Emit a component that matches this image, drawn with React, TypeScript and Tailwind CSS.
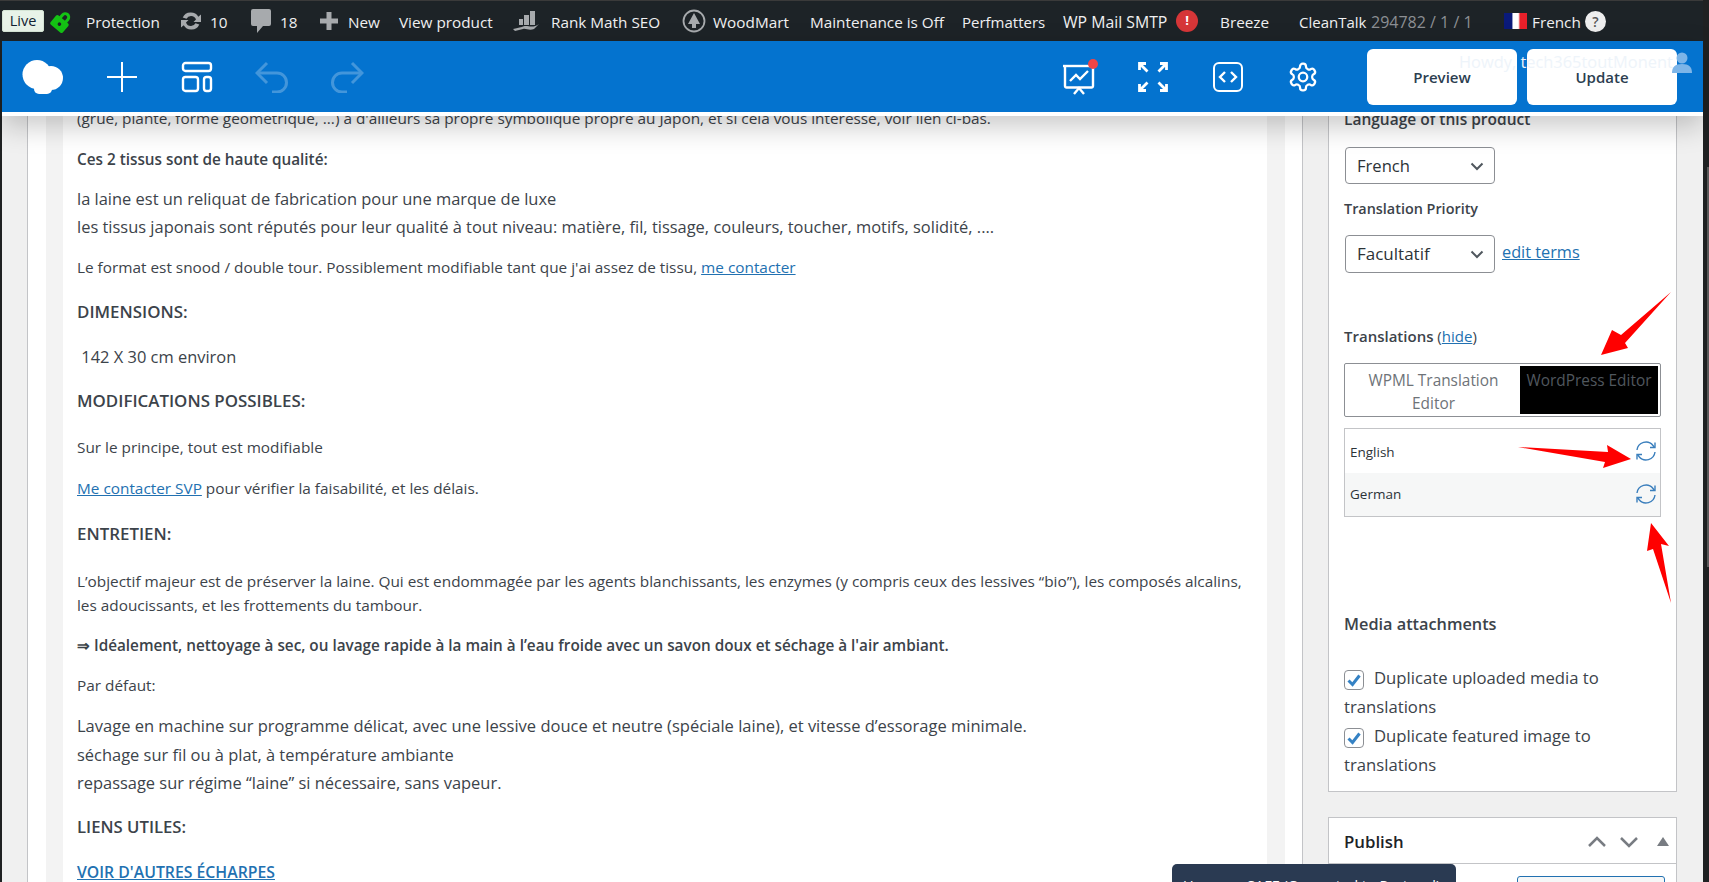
import React from "react";

const Chevron = () => (
  <svg width="16" height="16" viewBox="0 0 16 16" fill="none" stroke="#50575e" strokeWidth="2" className="shrink-0">
    <path d="M2.500 5.500 8 11l5.500-5.500" />
  </svg>
);

const Sync = () => (
  <svg width="22" height="22" viewBox="0 0 22 22" fill="none" stroke="#3b7fbd" strokeWidth="1.400">
    <path d="M2 10a9 9 0 0 1 16-4.500l1.500 2" />
    <path d="M20 2.500v5h-5" />
    <path d="M20 12a9 9 0 0 1-16 4.500l-1.500-2" />
    <path d="M2 19.500v-5h5" />
  </svg>
);

const Check = () => (
  <span className="inline-flex w-[20px] h-[20px] rounded-[4px] border border-[#8c8f94] items-center justify-center align-[-4px] mr-[10px] bg-white">
    <svg width="16" height="16" viewBox="0 0 16 16" fill="none" stroke="#3582c4" strokeWidth="3">
      <path d="M2.500 8.500 6.500 12.500 13.500 3.500" />
    </svg>
  </span>
);

const P = ({ className, children }: { className: string; children: React.ReactNode }) => (
  <p className={`whitespace-nowrap ${className}`}>{children}</p>
);

export default function App() {
  return (
    <div className="w-[1709px] h-[882px] overflow-hidden flex bg-[#1f2122] text-[#3c434a] font-['Open_Sans','Noto_Sans',sans-serif] relative">
      <div className="w-[1703px] shrink-0 flex flex-col h-full">
        {/* Admin bar */}
        <div className="h-[41px] shrink-0 bg-[#1d2327] border-t border-[#3a3a3a] flex items-center text-[15.3px] text-[#f0f0f1] pl-[2px] whitespace-nowrap">
          <span className="w-[42px] h-[22px] bg-[#e8f3e8] border border-[#d5e5d5] rounded-[2px] text-[#123] flex items-center justify-center text-[14.5px]">Live</span>
          <svg width="24" height="24" viewBox="0 0 24 24" className="ml-[6px] shrink-0">
            <g transform="rotate(40 12 12)" fill="#14c214">
              <rect x="4" y="10" width="16" height="12" rx="2" />
              <path d="M7 11V7a5 5 0 0 1 10 0v4h-3V7a2 2 0 0 0-4 0v4z" />
              <circle cx="12" cy="16" r="1.800" fill="#1d2327" />
            </g>
          </svg>
          <span className="ml-[12px] w-[75px] pt-[2px]">Protection</span>
          <svg width="24" height="24" viewBox="0 0 24 24" className="ml-[18px] shrink-0" fill="#a7aaad">
            <path d="M12 3.500a8.500 8.500 0 0 1 7.300 4.200L22 5.500V13h-7.500l2.500-2.500A5.200 5.200 0 0 0 12 7a5 5 0 0 0-4.500 2.700L3.700 8.600A8.500 8.500 0 0 1 12 3.500z" />
            <path d="M12 20.500a8.500 8.500 0 0 1-7.300-4.200L2 18.500V11h7.500L7 13.500A5.200 5.200 0 0 0 12 17a5 5 0 0 0 4.500-2.700l3.800 1.100A8.500 8.500 0 0 1 12 20.500z" />
          </svg>
          <span className="ml-[7px] w-[18px] pt-[2px]">10</span>
          <svg width="22" height="26" viewBox="0 0 22 26" className="ml-[22px] shrink-0" fill="#a7aaad">
            <path d="M3 1h16a2 2 0 0 1 2 2v13a2 2 0 0 1-2 2h-6l-6 7v-7H3a2 2 0 0 1-2-2V3a2 2 0 0 1 2-2z" />
          </svg>
          <span className="ml-[8px] w-[18px] pt-[2px]">18</span>
          <svg width="18" height="18" viewBox="0 0 18 18" className="ml-[22px] shrink-0" fill="#a7aaad">
            <path d="M6.500 0h5v6.500H18v5h-6.500V18h-5v-6.500H0v-5h6.500z" />
          </svg>
          <span className="ml-[10px] w-[33px] pt-[2px]">New</span>
          <span className="ml-[18px] w-[96px] pt-[2px]">View product</span>
          <svg width="26" height="22" viewBox="0 0 26 22" className="ml-[18px] shrink-0" fill="#a7aaad">
            <rect x="6" y="9" width="4" height="6" />
            <rect x="11" y="5" width="5" height="10" />
            <rect x="17" y="1" width="5" height="14" />
            <path d="M0 19c7-1 10-3 13-3s8 2 13-2l-5 5c-5 2-8-1-11 0l-8 2z" />
          </svg>
          <span className="ml-[12px] w-[111px] pt-[2px]">Rank Math SEO</span>
          <svg width="24" height="24" viewBox="0 0 24 24" className="ml-[20px] shrink-0">
            <circle cx="12" cy="12" r="10.500" fill="none" stroke="#a7aaad" strokeWidth="1.800" />
            <path d="M12 4l6 11h-4v4h-4v-4H6z" fill="#a7aaad" />
          </svg>
          <span className="ml-[7px] w-[78px] pt-[2px]">WoodMart</span>
          <span className="ml-[19px] w-[134px] pt-[2px]">Maintenance is Off</span>
          <span className="ml-[18px] w-[82px] pt-[2px] text-[15px]">Perfmatters</span>
          <span className="ml-[19px] w-[105px] pt-[4px] text-[15.8px]">WP Mail SMTP</span>
          <span className="ml-[8px] w-[22px] h-[22px] rounded-full bg-[#d63638] flex items-center justify-center text-white text-[13px] font-bold">!</span>
          <span className="ml-[22px] w-[48px] pt-[2px]">Breeze</span>
          <span className="ml-[31px] w-[68px] pt-[2px] text-[15px]">CleanTalk</span>
          <span className="ml-[4px] w-[103px] pt-[2px] text-[#8c8f94] text-[16px]">294782 / 1 / 1</span>
          <span className="ml-[30px] w-[23px] h-[16px] flex shrink-0 bg-[linear-gradient(90deg,#0a1a7a_0%,#0a1a7a_33%,#ffffff_40%,#ffffff_62%,#e8202a_70%,#e8202a_100%)]" />
          <span className="ml-[5px] w-[48px] pt-[2px]">French</span>
          <span className="ml-[5px] w-[21px] h-[21px] rounded-full bg-[#eeeeee] text-[#555] flex items-center justify-center text-[14px] font-semibold">?</span>
        </div>

        {/* Blue toolbar */}
        <div className="ml-[2px] relative z-20 shrink-0 border-b-4 border-white shadow-[0_10px_28px_rgba(0,0,0,0.22)]">
          <div className="h-[71px] bg-[#0473cf] flex items-center">
            <svg width="42" height="34" viewBox="0 0 42 34" className="ml-[20px] shrink-0" fill="#fff">
              <circle cx="15" cy="14.500" r="14.500" />
              <circle cx="29" cy="18" r="12" />
              <rect x="12" y="22" width="18" height="12" rx="5" />
            </svg>
            <svg width="32" height="32" viewBox="0 0 32 32" className="ml-[42px] shrink-0" stroke="#fff" strokeWidth="2" fill="none">
              <path d="M16 1v30M1 16h30" />
            </svg>
            <svg width="32" height="32" viewBox="0 0 32 32" className="ml-[43px] shrink-0" stroke="#fff" strokeWidth="2.400" fill="none">
              <rect x="2" y="2" width="28" height="8" rx="2.500" />
              <rect x="2" y="16" width="15" height="14" rx="2.500" />
              <rect x="23" y="16" width="7" height="14" rx="2.500" />
            </svg>
            <svg width="34" height="32" viewBox="0 0 34 32" className="ml-[42px] shrink-0 opacity-25" stroke="#fff" strokeWidth="3" fill="none">
              <path d="M12 2 2 12l10 10" />
              <path d="M2 12h20a9.500 9.500 0 0 1 0 19h-5" />
            </svg>
            <svg width="34" height="32" viewBox="0 0 34 32" className="ml-[41px] shrink-0 opacity-25" stroke="#fff" strokeWidth="3" fill="none">
              <path d="m22 2 10 10-10 10" />
              <path d="M32 12H12a9.500 9.500 0 0 0 0 19h5" />
            </svg>
            <div className="relative ml-[698px] w-[34px] h-[36px] shrink-0">
              <svg width="34" height="34" viewBox="0 0 34 34" stroke="#fff" strokeWidth="2.400" fill="none" className="mt-[2px]">
                <path d="M1 5h32" />
                <path d="M3 5v20a1.500 1.500 0 0 0 1.500 1.500h25A1.500 1.500 0 0 0 31 25V5" />
                <path d="m8 20 6-6 4 4 8-8" />
                <path d="m12 33 5-6 5 6" />
              </svg>
              <span className="absolute right-[-2px] top-0 w-[10px] h-[10px] rounded-full bg-[#f04545]" />
            </div>
            <svg width="30" height="30" viewBox="0 0 30 30" className="ml-[42px] shrink-0" stroke="#fff" strokeWidth="2.800" fill="none">
              <path d="M1.500 8V1.500H8M1.500 1.500l8 8" />
              <path d="M22 1.500h6.500V8M28.500 1.500l-8 8" />
              <path d="M1.500 22v6.500H8M1.500 28.500l8-8" />
              <path d="M22 28.500h6.500V22M28.500 28.500l-8-8" />
            </svg>
            <svg width="30" height="30" viewBox="0 0 30 30" className="ml-[45px] shrink-0" stroke="#fff" strokeWidth="2" fill="none">
              <rect x="1" y="1" width="28" height="28" rx="5" />
              <path d="m12 10-5 5 5 5M18 10l5 5-5 5" strokeWidth="2.400" />
            </svg>
            <svg width="32" height="32" viewBox="0 0 24 24" className="ml-[44px] shrink-0" stroke="#fff" strokeWidth="1.700" fill="none" strokeLinecap="round" strokeLinejoin="round">
              <path d="M12.220 2h-.44a2 2 0 0 0-2 2v.18a2 2 0 0 1-1 1.730l-.43.25a2 2 0 0 1-2 0l-.15-.08a2 2 0 0 0-2.730.73l-.22.380a2 2 0 0 0 .73 2.730l.15.1a2 2 0 0 1 1 1.720v.510a2 2 0 0 1-1 1.740l-.15.090a2 2 0 0 0-.73 2.730l.22.380a2 2 0 0 0 2.730.730l.15-.080a2 2 0 0 1 2 0l.43.250a2 2 0 0 1 1 1.730V20a2 2 0 0 0 2 2h.44a2 2 0 0 0 2-2v-.180a2 2 0 0 1 1-1.730l.43-.250a2 2 0 0 1 2 0l.15.080a2 2 0 0 0 2.730-.730l.22-.390a2 2 0 0 0-.730-2.730l-.150-.080a2 2 0 0 1-1-1.740v-.500a2 2 0 0 1 1-1.740l.150-.090a2 2 0 0 0 .730-2.730l-.220-.380a2 2 0 0 0-2.730-.730l-.150.080a2 2 0 0 1-2 0l-.430-.250a2 2 0 0 1-1-1.730V4a2 2 0 0 0-2-2z" />
              <circle cx="12" cy="12" r="3.200" />
            </svg>
            <button className="ml-[48px] w-[150px] h-[56px] pt-[1px] bg-white rounded-[6px] text-[15px] font-semibold text-[#2c3e50] mt-[1px]">Preview</button>
            <button className="ml-[10px] w-[150px] h-[56px] pt-[1px] bg-white rounded-[6px] text-[15px] font-semibold text-[#2c3e50] mt-[1px]">Update</button>
          </div>
          <span className="absolute left-[1457px] top-[9px] text-[16.4px] text-[#eef4fa] whitespace-nowrap">Howdy, tech365toutMonent</span>
          <svg width="20" height="22" viewBox="0 0 20 22" className="absolute left-[1670px] top-[11px]" fill="#7db5e8">
            <circle cx="10" cy="6" r="5.500" />
            <path d="M0 21c0-6 3-9 10-9s10 3 10 9z" />
          </svg>
        </div>

        {/* Page body */}
        <div className="flex-1 min-h-0 ml-[2px] flex bg-[#f0f0f0] overflow-hidden">
          <div className="ml-[25px] w-[1276px] shrink-0 flex border-x border-[#c3c4c7] bg-white">
            <div className="w-[18px] bg-white" />
            <div className="w-[17px] bg-[#f3f3f3]" />
            <div className="w-[1204px] pl-[14px] -mt-[10px] text-[15.35px] leading-[24px] overflow-hidden">
              <P className="">(grue, plante, forme géométrique, ...) a d'ailleurs sa propre symbolique propre au Japon, et si cela vous intéresse, voir lien ci-bas.</P>
              <P className="mt-[17px] text-[15.3px] font-semibold">Ces 2 tissus sont de haute qualité:</P>
              <P className="mt-[14px] text-[16.45px] leading-[28px]">la laine est un reliquat de fabrication pour une marque de luxe</P>
              <P className="text-[16.45px] leading-[28px]">les tissus japonais sont réputés pour leur qualité à tout niveau: matière, fil, tissage, couleurs, toucher, motifs, solidité, ....</P>
              <P className="mt-[14px]">Le format est snood / double tour. Possiblement modifiable tant que j'ai assez de tissu, <a className="text-[#2271b1] underline">me contacter</a></P>
              <P className="mt-[21px] text-[16.9px] font-semibold">DIMENSIONS:</P>
              <P className="mt-[19px] text-[16.45px] leading-[28px]">&nbsp;142 X 30 cm environ</P>
              <P className="mt-[18px] text-[16.9px] font-semibold">MODIFICATIONS POSSIBLES:</P>
              <P className="mt-[22px]">Sur le principe, tout est modifiable</P>
              <P className="mt-[17px]"><a className="text-[#2271b1] underline">Me contacter SVP</a> pour vérifier la faisabilité, et les délais.</P>
              <P className="mt-[22px] text-[16.9px] font-semibold">ENTRETIEN:</P>
              <P className="mt-[23px]">L’objectif majeur est de préserver la laine. Qui est endommagée par les agents blanchissants, les enzymes (y compris ceux des lessives “bio”), les composés alcalins,</P>
              <P className="">les adoucissants, et les frottements du tambour.</P>
              <P className="mt-[16px] text-[15.3px] font-semibold">⇒ Idéalement, nettoyage à sec, ou lavage rapide à la main à l’eau froide avec un savon doux et séchage à l'air ambiant.</P>
              <P className="mt-[16px]">Par défaut:</P>
              <P className="mt-[15px] text-[16.5px] leading-[28px]">Lavage en machine sur programme délicat, avec une lessive douce et neutre (spéciale laine), et vitesse d’essorage minimale.</P>
              <P className="mt-[1px] text-[16.45px] leading-[28px]">séchage sur fil ou à plat, à température ambiante</P>
              <P className="text-[16.45px] leading-[28px]">repassage sur régime “laine” si nécessaire, sans vapeur.</P>
              <P className="mt-[18px] text-[16.7px] font-semibold">LIENS UTILES:</P>
              <P className="mt-[21px]"><a className="text-[#2271b1] underline font-semibold text-[15.8px]">VOIR D'AUTRES ÉCHARPES</a></P>
            </div>
            <div className="w-[18px] bg-[#f3f3f3]" />
            <div className="w-[17px] bg-white" />
          </div>

          {/* Sidebar */}
          <div className="ml-[25px] w-[349px] shrink-0 -mt-[9px]">
            <div className="h-[685px] bg-white border border-[#c3c4c7] px-[15px]">
              <p className="text-[15.5px] leading-[23px] font-semibold whitespace-nowrap">Language of this product</p>
              <div className="mt-[16px] ml-[1px] w-[150px] h-[37px] border border-[#8c8f94] rounded-[4px] flex items-center justify-between pl-[11px] pr-[9px] text-[16.6px] text-[#2c3338]">
                <span className="pt-[2px]">French</span> <Chevron />
              </div>
              <p className="mt-[13px] text-[14.4px] leading-[24px] font-semibold whitespace-nowrap">Translation Priority</p>
              <div className="mt-[14px] flex items-start">
                <div className="ml-[1px] w-[150px] h-[38px] border border-[#8c8f94] rounded-[4px] flex items-center justify-between pl-[11px] pr-[9px] text-[17px] text-[#2c3338]">
                  Facultatif <Chevron />
                </div>
                <a className="ml-[7px] text-[16.3px] leading-[34px] text-[#2271b1] underline">edit terms</a>
              </div>
              <p className="mt-[51px] text-[15px] leading-[24px] whitespace-nowrap"><span className="font-semibold">Translations</span> (<a className="text-[#2271b1] underline">hide</a>)</p>
              <div className="mt-[15px] w-[317px] h-[54px] border border-[#8c8f94] rounded-[2px] flex p-[2px] text-[15.4px] leading-[23px] text-center">
                <div className="w-[173px] text-[#6e7378] pt-[3px] px-[8px]">WPML Translation<br />Editor</div>
                <div className="flex-1 bg-black text-[#50575e] pt-[3px] whitespace-nowrap">WordPress Editor</div>
              </div>
              <div className="mt-[11px] w-[317px] h-[89px] border border-[#c3c4c7] flex flex-col text-[13.5px] text-[#2c3338]">
                <div className="h-[44px] flex items-center justify-between pl-[5px] pr-[3px]"><span className="mt-[3px]">English</span><Sync /></div>
                <div className="flex-1 bg-[#f6f7f7] flex items-center justify-between pl-[5px] pr-[3px]"><span>German</span><span className="-mt-[2px]"><Sync /></span></div>
              </div>
              <p className="mt-[93px] text-[16.3px] leading-[28px] font-semibold whitespace-nowrap">Media attachments</p>
              <div className="mt-[25px] text-[16.7px] leading-[29px] w-[310px]">
                <p className="whitespace-nowrap"><Check />Duplicate uploaded media to</p>
                <p>translations</p>
                <p className="whitespace-nowrap"><Check />Duplicate featured image to</p>
                <p>translations</p>
              </div>
            </div>
            <div className="mt-[25px] h-[80px] bg-white border border-[#c3c4c7]">
              <div className="h-[46px] pt-[2px] border-b border-[#c3c4c7] flex items-center pl-[15px] pr-[7px]">
                <span className="text-[16.8px] font-semibold text-[#1d2327]">Publish</span>
                <svg width="18" height="12" viewBox="0 0 18 12" fill="none" stroke="#787c82" strokeWidth="2.500" className="ml-auto"><path d="m1 10 8-8 8 8" /></svg>
                <svg width="18" height="12" viewBox="0 0 18 12" fill="none" stroke="#787c82" strokeWidth="2.500" className="ml-[14px]"><path d="m1 2 8 8 8-8" /></svg>
                <svg width="12" height="9" viewBox="0 0 12 9" fill="#787c82" className="ml-[19px]"><path d="M6 0l6 9H0z" /></svg>
              </div>
              <div className="flex justify-end pr-[11px] pt-[12px]">
                <div className="w-[148px] h-[30px] border border-[#2271b1] rounded-[3px] bg-[#f6f7f7]" />
              </div>
            </div>
          </div>
        </div>
      </div>

      {/* Scrollbar */}
      <div className="w-[6px] shrink-0 flex justify-end bg-[#1f2122]">
        <div className="w-[2px] h-[400px] mt-[167px] bg-[#5a5a5a]" />
      </div>

      {/* Tooltip */}
      <div className="absolute left-[1172px] top-[864px] w-[284px] h-[40px] bg-[#2a3a52] rounded-t-[5px] text-white text-[14.5px] pl-[11px] pt-[11px] whitespace-nowrap">
        Usage as SAFE (Converted to Protocol)
      </div>

      {/* Red annotation arrows */}
      <svg width="1709" height="882" viewBox="0 0 1709 882" className="absolute left-0 top-0 pointer-events-none" fill="#ff0000">
        <polygon points="1671,292 1621,335 1612,330 1601,355 1628,348 1625,343" />
        <polygon points="1518,447 1608,452 1607,445 1631,459 1603,468 1605,462" />
        <polygon points="1651,523 1669,546 1661,544 1671,603 1653,549 1647,551" />
      </svg>
    </div>
  );
}
